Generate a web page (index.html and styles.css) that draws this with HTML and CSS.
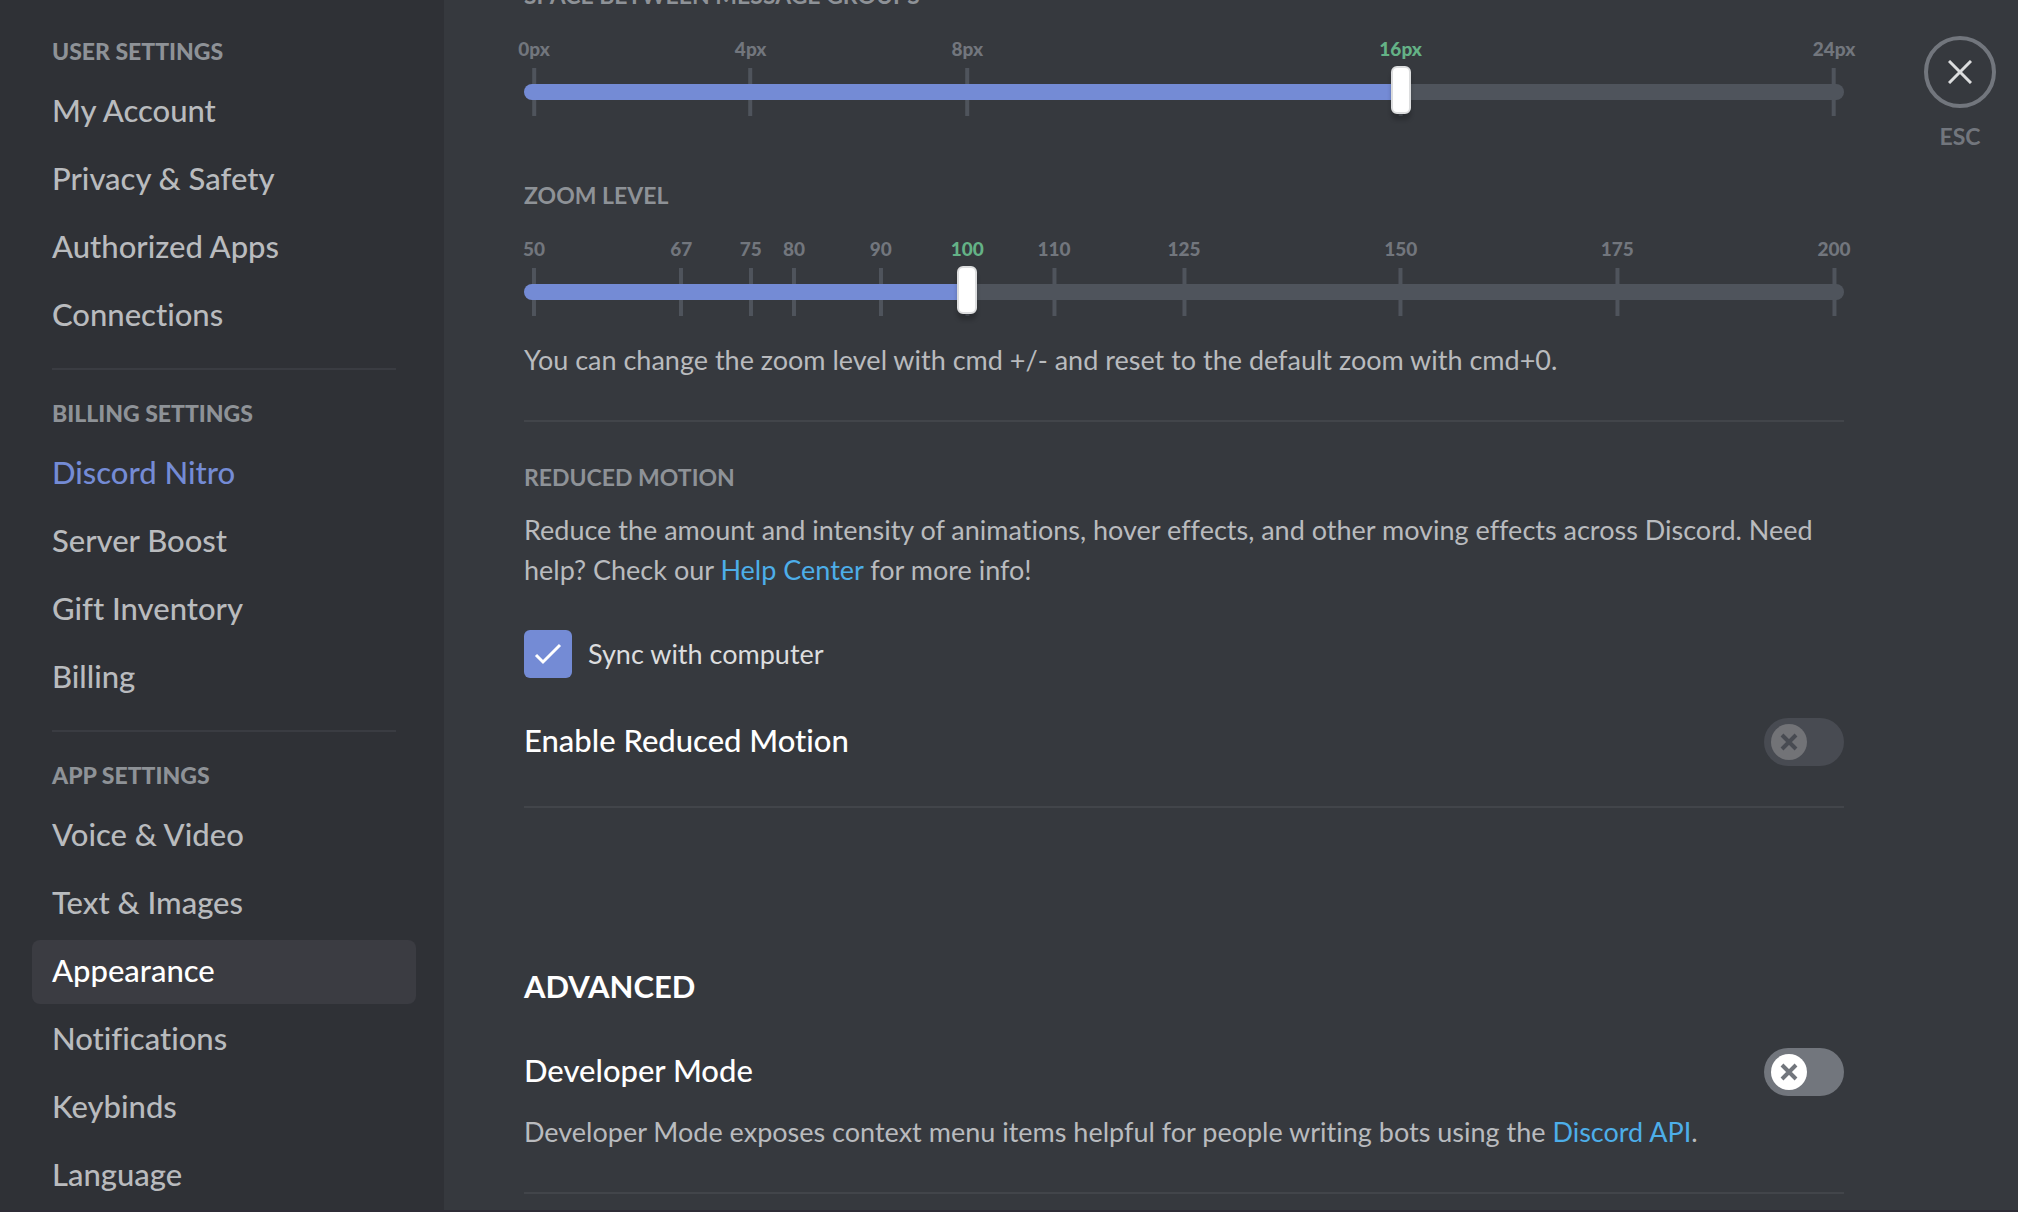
FILE: index.html
```html
<!DOCTYPE html>
<html lang="en">
<head>
<meta charset="utf-8">
<meta name="viewport" content="width=device-width, initial-scale=1">
<title>Appearance - User Settings</title>
<link rel="stylesheet" href="styles.css">
</head>
<body>
<div class="app">
  <nav class="sidebar" aria-label="Settings">
    <section class="nav-group">
      <h2 class="nav-title">User Settings</h2>
      <a class="nav-item" href="#account">My Account</a>
      <a class="nav-item" href="#privacy">Privacy &amp; Safety</a>
      <a class="nav-item" href="#apps">Authorized Apps</a>
      <a class="nav-item" href="#connections">Connections</a>
    </section>
    <section class="nav-group">
      <h2 class="nav-title">Billing Settings</h2>
      <a class="nav-item nav-item-premium" href="#nitro">Discord Nitro</a>
      <a class="nav-item" href="#boost">Server Boost</a>
      <a class="nav-item" href="#gifts">Gift Inventory</a>
      <a class="nav-item" href="#billing">Billing</a>
    </section>
    <section class="nav-group">
      <h2 class="nav-title">App Settings</h2>
      <a class="nav-item" href="#voice">Voice &amp; Video</a>
      <a class="nav-item" href="#text">Text &amp; Images</a>
      <a class="nav-item nav-item-active" href="#appearance" aria-current="page">Appearance</a>
      <a class="nav-item" href="#notifications">Notifications</a>
      <a class="nav-item" href="#keybinds">Keybinds</a>
      <a class="nav-item" href="#language">Language</a>
    </section>
  </nav>

  <main class="content">
    <section class="field">
      <label class="field-title field-title-scrolled" for="group-space">Space Between Message Groups</label>
      <div class="slider">
        <div class="marks">
          <span class="mark" style="--at:0%">0px</span>
          <span class="mark" style="--at:16.667%">4px</span>
          <span class="mark" style="--at:33.333%">8px</span>
          <span class="mark mark-current" style="--at:66.667%">16px</span>
          <span class="mark" style="--at:100%">24px</span>
        </div>
        <input class="range" id="group-space" type="range" min="0" max="24" value="16" style="--fill:66.667%">
      </div>
    </section>

    <section class="field field-zoom">
      <label class="field-title" for="zoom-level">Zoom Level</label>
      <div class="slider">
        <div class="marks">
          <span class="mark" style="--at:0%">50</span>
          <span class="mark" style="--at:11.333%">67</span>
          <span class="mark" style="--at:16.667%">75</span>
          <span class="mark" style="--at:20%">80</span>
          <span class="mark" style="--at:26.667%">90</span>
          <span class="mark mark-current" style="--at:33.333%">100</span>
          <span class="mark" style="--at:40%">110</span>
          <span class="mark" style="--at:50%">125</span>
          <span class="mark" style="--at:66.667%">150</span>
          <span class="mark" style="--at:83.333%">175</span>
          <span class="mark" style="--at:100%">200</span>
        </div>
        <input class="range" id="zoom-level" type="range" min="50" max="200" value="100" style="--fill:33.333%">
      </div>
      <p class="note note-zoom">You can change the zoom level with cmd +/- and reset to the default zoom with cmd+0.</p>
    </section>

    <section class="field field-motion">
      <h2 class="field-title">Reduced Motion</h2>
      <p class="note note-motion">Reduce the amount and intensity of animations, hover effects, and other moving effects across Discord. Need help? Check our <a class="link" href="#help">Help Center</a> for more info!</p>
      <label class="check">
        <span class="check-box">
          <input class="check-input" type="checkbox" checked>
          <svg class="check-icon" viewBox="0 0 28 22" aria-hidden="true"><path d="M2 12l7 7L26 2" fill="none" stroke="#fff" stroke-width="3"/></svg>
        </span>
        Sync with computer
      </label>
      <div class="toggle-row">
        <label class="toggle-label" for="reduced-motion">Enable Reduced Motion</label>
        <span class="switch switch-disabled">
          <input class="switch-input" id="reduced-motion" type="checkbox" disabled>
          <span class="switch-knob"><svg class="switch-icon" viewBox="0 0 18 18" aria-hidden="true"><path d="M2 2l14 14M16 2L2 16" fill="none" stroke="currentColor" stroke-width="4"/></svg></span>
        </span>
      </div>
    </section>

    <section class="field field-advanced">
      <h1 class="page-title">Advanced</h1>
      <div class="toggle-row">
        <label class="toggle-label" for="developer-mode">Developer Mode</label>
        <span class="switch">
          <input class="switch-input" id="developer-mode" type="checkbox">
          <span class="switch-knob"><svg class="switch-icon" viewBox="0 0 18 18" aria-hidden="true"><path d="M2 2l14 14M16 2L2 16" fill="none" stroke="currentColor" stroke-width="4"/></svg></span>
        </span>
      </div>
      <p class="note note-developer">Developer Mode exposes context menu items helpful for people writing bots using the <a class="link" href="#api">Discord API</a>.</p>
    </section>
  </main>

  <aside class="tools">
    <button class="close" type="button">
      <span class="close-ring"><svg class="close-icon" viewBox="0 0 24 24" aria-hidden="true"><path d="M1 1l22 22M23 1L1 23" fill="none" stroke="#dcddde" stroke-width="3"/></svg></span>
      ESC
    </button>
  </aside>
</div>
</body>
</html>
```
FILE: styles.css
```css
* {
  box-sizing: border-box;
}

body {
  margin: 0;
  overflow: hidden;
  background: #36393e;
  color: #b9bbbe;
  font-family: Lato, "Noto Sans", sans-serif;
  font-size: 27px;
  font-variant-ligatures: none;
  line-height: 40px;
}

h1,
h2,
p {
  margin: 0;
}

.app {
  display: flex;
  height: 100vh;
  overflow: hidden;
  border-bottom: 2px solid #2f2d36;
}

/* Sidebar */
.sidebar {
  flex: none;
  width: 444px;
  padding: 24px 28px 0 32px;
  background: #2f3136;
}

.nav-group + .nav-group {
  padding-top: 16px;
}

.nav-group + .nav-group::before {
  content: "";
  display: block;
  height: 2px;
  margin: 0 20px 16px;
  background: #3a3c42;
}

.nav-title {
  padding: 0 20px 2px;
  color: #8e9297;
  font-size: 23px;
  font-weight: 900;
  line-height: 54px;
  text-transform: uppercase;
}

.nav-item {
  display: block;
  margin-bottom: 4px;
  padding: 0 20px 4px;
  border-radius: 8px;
  color: #b9bbbe;
  font-size: 31px;
  font-weight: 500;
  line-height: 60px;
  text-decoration: none;
}

.nav-item-premium {
  color: #748bd5;
}

.nav-item-active {
  background: #3b3c42;
  color: #fff;
}

/* Content */
.content {
  flex: 1;
  min-width: 0;
  padding-left: 80px;
}

.field-title {
  display: block;
  padding-bottom: 2px;
  color: #8e9297;
  font-size: 23px;
  font-weight: 700;
  line-height: 30px;
  text-transform: uppercase;
}

.field-title-scrolled {
  margin-top: -20px;
}

.field-zoom {
  margin-top: 64px;
  padding-bottom: 40px;
  border-bottom: 2px solid #42454a;
}

.field-motion {
  padding: 40px 0 40px;
  border-bottom: 2px solid #42454a;
}

.field-advanced {
  padding: 160px 0 40px;
  border-bottom: 2px solid #42454a;
}

.note {
  color: #b9bbbe;
}

.note-zoom {
  margin-top: 24px;
}

.note-motion {
  margin-top: 16px;
}

.note-developer {
  margin-top: 16px;
}

.link {
  color: #4daee9;
  text-decoration: none;
}

/* Slider */
.slider {
  position: relative;
  height: 104px;
  padding-top: 56px;
}

.marks {
  position: absolute;
  inset: 24px 10px 0;
}

.mark {
  position: absolute;
  left: var(--at);
  display: flex;
  flex-direction: column;
  align-items: center;
  color: #72767d;
  font-size: 19px;
  font-weight: 900;
  line-height: 26px;
  transform: translateX(-50%);
}

.mark::after {
  content: "";
  width: 4px;
  height: 48px;
  margin-top: 6px;
  background: #4f545c;
}

.mark-current {
  color: #64b286;
}

.range {
  position: relative;
  display: block;
  width: 100%;
  height: 48px;
  margin: 0;
  background: none;
  appearance: none;
}

.range::-webkit-slider-runnable-track {
  height: 16px;
  border-radius: 8px;
  background: linear-gradient(to right, #748bd5 var(--fill), #4f545c var(--fill));
}

.range::-webkit-slider-thumb {
  width: 20px;
  height: 48px;
  margin-top: -18px;
  border: 2px solid #dcddde;
  border-radius: 6px;
  background: #fff;
  box-shadow: 0 6px 4px rgba(0, 0, 0, 0.2);
  appearance: none;
}

/* Checkbox */
.check {
  display: flex;
  align-items: center;
  gap: 16px;
  margin-top: 40px;
  color: #dcddde;
}

.check-box {
  display: grid;
  place-items: center;
  width: 48px;
  height: 48px;
}

.check-input,
.check-icon {
  grid-area: 1 / 1;
}

.check-input {
  width: 48px;
  height: 48px;
  margin: 0;
  border-radius: 6px;
  background: #748bd5;
  appearance: none;
}

.check-icon {
  z-index: 1;
  width: 28px;
  height: 22px;
}

/* Toggle rows */
.toggle-row {
  display: flex;
  align-items: center;
  justify-content: space-between;
  height: 48px;
  margin-top: 40px;
}

.toggle-label {
  padding-bottom: 4px;
  color: #fff;
  font-size: 31px;
  font-weight: 500;
}

.switch {
  display: grid;
  align-items: center;
  width: 80px;
  height: 48px;
}

.switch-input,
.switch-knob {
  grid-area: 1 / 1;
}

.switch-input {
  width: 80px;
  height: 48px;
  margin: 0;
  border-radius: 24px;
  background: #72767d;
  appearance: none;
}

.switch-knob {
  z-index: 1;
  display: grid;
  place-items: center;
  width: 36px;
  height: 36px;
  margin-left: 7px;
  border-radius: 50%;
  background: #fff;
  color: #72767d;
}

.switch-disabled .switch-input {
  background: #484b52;
}

.switch-disabled .switch-knob {
  background: #727377;
  color: #484b52;
}

.switch-icon {
  width: 18px;
  height: 18px;
}

.page-title {
  padding-bottom: 4px;
  color: #fff;
  font-size: 31px;
  font-weight: 700;
  line-height: 36px;
  text-transform: uppercase;
}

/* Close */
.tools {
  flex: none;
  width: 174px;
  padding: 36px 22px 0 80px;
}

.close {
  display: flex;
  flex-direction: column;
  align-items: center;
  gap: 12px;
  width: 72px;
  padding: 0;
  border: 0;
  background: none;
  color: #72767d;
  font: 700 23px/32px Lato, "Noto Sans", sans-serif;
}

.close-ring {
  display: grid;
  place-items: center;
  width: 72px;
  height: 72px;
  border: 4px solid #72767d;
  border-radius: 50%;
}

.close-icon {
  width: 24px;
  height: 24px;
}
```
